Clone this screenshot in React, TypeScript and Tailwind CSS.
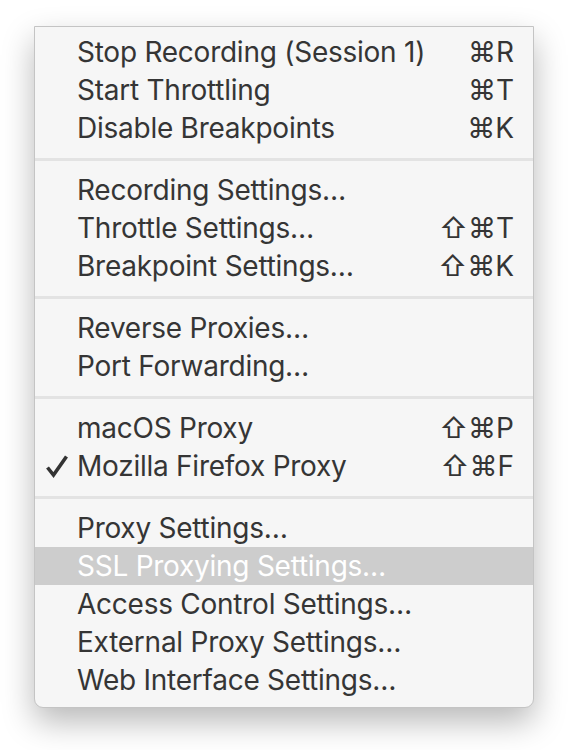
import React from 'react';

type Item = {
  label: string;
  shortcut?: string;
  checked?: boolean;
  active?: boolean;
};

const groups: Item[][] = [
  [
    { label: 'Stop Recording (Session 1)', shortcut: '⌘R' },
    { label: 'Start Throttling', shortcut: '⌘T' },
    { label: 'Disable Breakpoints', shortcut: '⌘K' },
  ],
  [
    { label: 'Recording Settings…' },
    { label: 'Throttle Settings…', shortcut: '⇧⌘T' },
    { label: 'Breakpoint Settings…', shortcut: '⇧⌘K' },
  ],
  [{ label: 'Reverse Proxies…' }, { label: 'Port Forwarding…' }],
  [
    { label: 'macOS Proxy', shortcut: '⇧⌘P' },
    { label: 'Mozilla Firefox Proxy', shortcut: '⇧⌘F', checked: true },
  ],
  [
    { label: 'Proxy Settings…' },
    { label: 'SSL Proxying Settings…', active: true },
    { label: 'Access Control Settings…' },
    { label: 'External Proxy Settings…' },
    { label: 'Web Interface Settings…' },
  ],
];

function Check() {
  return (
    <svg width="24" height="24" viewBox="0 0 24 24" className="block">
      <path
        d="M2.5 13.5 L8.5 21 L21.5 2.5"
        fill="none"
        stroke="#333333"
        strokeWidth="3.6"
        strokeLinecap="butt"
        strokeLinejoin="miter"
      />
    </svg>
  );
}

function Row({ item }: { item: Item }) {
  return (
    <div
      className={`flex h-[38px] items-center ${
        item.active ? 'bg-[#cdcdcd] text-white' : 'text-[#353535]'
      }`}
    >
      <div className="flex w-[42px] justify-end pr-[8px]">
        {item.checked && <Check />}
      </div>
      <span className="flex-1 whitespace-nowrap tracking-[-0.25px]">{item.label}</span>
      <span className="pr-[19px] whitespace-nowrap">{item.shortcut}</span>
    </div>
  );
}

export default function App() {
  return (
    <div className="min-h-[750px] bg-white pl-[34px] pt-[26px]">
      <div
        className="w-[500px] rounded-b-[9px] border border-[#c4c4c4] bg-[#f6f6f6] pb-[8px] pt-[6px] text-[28px] leading-none shadow-[0_14px_32px_rgba(0,0,0,0.28)]"
        style={{ fontFamily: 'Inter, "Noto Sans", "DejaVu Sans", sans-serif' }}
      >
        {groups.map((g, i) => (
          <div key={i}>
            {i > 0 && (
              <div className="flex h-[24px] items-center">
                <div className="h-[3px] w-full bg-[#e3e3e3]" />
              </div>
            )}
            {g.map((item) => (
              <Row key={item.label} item={item} />
            ))}
          </div>
        ))}
      </div>
    </div>
  );
}
